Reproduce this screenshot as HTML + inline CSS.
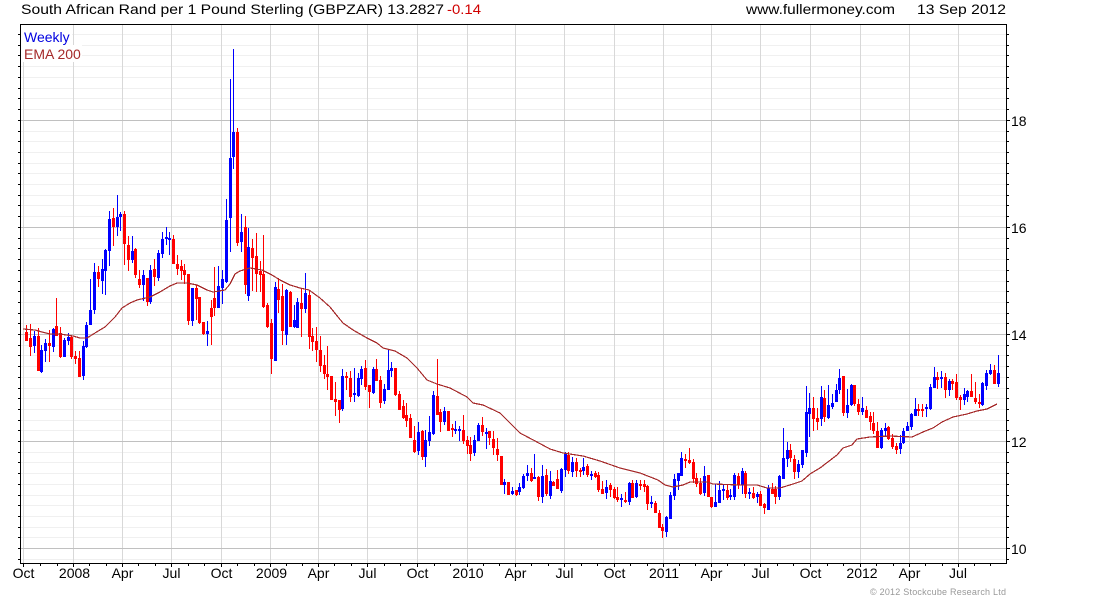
<!DOCTYPE html>
<html><head><meta charset="utf-8"><style>
html,body{margin:0;padding:0;background:#fff;width:1100px;height:600px;overflow:hidden}
svg{display:block}
text{font-family:"Liberation Sans",Arial,sans-serif;font-size:14px;fill:#000}
</style></head><body>
<svg width="1100" height="600" viewBox="0 0 1100 600" xmlns="http://www.w3.org/2000/svg">
<rect width="1100" height="600" fill="#fff"/>
<g shape-rendering="crispEdges" fill="none">
<path stroke="#f0f0f0" d="M21 34.5H1006M21 45.5H1006M21 55.5H1006M21 66.5H1006M21 77.5H1006M21 88.5H1006M21 98.5H1006M21 109.5H1006M21 131.5H1006M21 141.5H1006M21 152.5H1006M21 163.5H1006M21 173.5H1006M21 184.5H1006M21 195.5H1006M21 205.5H1006M21 216.5H1006M21 238.5H1006M21 248.5H1006M21 259.5H1006M21 270.5H1006M21 281.5H1006M21 291.5H1006M21 302.5H1006M21 313.5H1006M21 323.5H1006M21 345.5H1006M21 355.5H1006M21 366.5H1006M21 377.5H1006M21 388.5H1006M21 398.5H1006M21 409.5H1006M21 420.5H1006M21 430.5H1006M21 452.5H1006M21 462.5H1006M21 473.5H1006M21 484.5H1006M21 495.5H1006M21 505.5H1006M21 516.5H1006M21 527.5H1006M21 537.5H1006M21 559.5H1006"/>
<path stroke="#d8d8d8" d="M23.5 25V563M73.5 25V563M122.5 25V563M171.5 25V563M221.5 25V563M270.5 25V563M318.5 25V563M367.5 25V563M417.5 25V563M467.5 25V563M515.5 25V563M564.5 25V563M614.5 25V563M663.5 25V563M711.5 25V563M760.5 25V563M810.5 25V563M860.5 25V563M909.5 25V563M958.5 25V563"/>
<path stroke="#c0c0c0" d="M21 120.5H1006M21 227.5H1006M21 334.5H1006M21 441.5H1006M21 548.5H1006"/>
<rect x="21" y="25" width="51" height="20" fill="#fff"/>
<rect x="21" y="45" width="61" height="17" fill="#fff"/>
<path stroke="#000" d="M20.5 24.5H1006.5V563.5H20.5Z"/>
<path stroke="#000" d="M18 34.5H20M18 45.5H20M18 55.5H20M18 66.5H20M18 77.5H20M18 88.5H20M18 98.5H20M18 109.5H20M18 120.5H20M18 131.5H20M18 141.5H20M18 152.5H20M18 163.5H20M18 173.5H20M18 184.5H20M18 195.5H20M18 205.5H20M18 216.5H20M18 227.5H20M18 238.5H20M18 248.5H20M18 259.5H20M18 270.5H20M18 281.5H20M18 291.5H20M18 302.5H20M18 313.5H20M18 323.5H20M18 334.5H20M18 345.5H20M18 355.5H20M18 366.5H20M18 377.5H20M18 388.5H20M18 398.5H20M18 409.5H20M18 420.5H20M18 430.5H20M18 441.5H20M18 452.5H20M18 462.5H20M18 473.5H20M18 484.5H20M18 495.5H20M18 505.5H20M18 516.5H20M18 527.5H20M18 537.5H20M18 548.5H20M18 559.5H20"/>
<path stroke="#000" d="M1007 34.5H1009M1007 45.5H1009M1007 55.5H1009M1007 66.5H1009M1007 77.5H1009M1007 88.5H1009M1007 98.5H1009M1007 109.5H1009M1007 120.5H1010M1007 131.5H1009M1007 141.5H1009M1007 152.5H1009M1007 163.5H1009M1007 173.5H1009M1007 184.5H1009M1007 195.5H1009M1007 205.5H1009M1007 216.5H1009M1007 227.5H1010M1007 238.5H1009M1007 248.5H1009M1007 259.5H1009M1007 270.5H1009M1007 281.5H1009M1007 291.5H1009M1007 302.5H1009M1007 313.5H1009M1007 323.5H1009M1007 334.5H1010M1007 345.5H1009M1007 355.5H1009M1007 366.5H1009M1007 377.5H1009M1007 388.5H1009M1007 398.5H1009M1007 409.5H1009M1007 420.5H1009M1007 430.5H1009M1007 441.5H1010M1007 452.5H1009M1007 462.5H1009M1007 473.5H1009M1007 484.5H1009M1007 495.5H1009M1007 505.5H1009M1007 516.5H1009M1007 527.5H1009M1007 537.5H1009M1007 548.5H1010M1007 559.5H1009"/>
<path stroke="#000" d="M23.5 564V567M73.5 564V567M122.5 564V567M171.5 564V567M221.5 564V567M270.5 564V567M318.5 564V567M367.5 564V567M417.5 564V567M467.5 564V567M515.5 564V567M564.5 564V567M614.5 564V567M663.5 564V567M711.5 564V567M760.5 564V567M810.5 564V567M860.5 564V567M909.5 564V567M958.5 564V567M40.5 564V566M57.5 564V566M89.5 564V566M106.5 564V566M138.5 564V566M155.5 564V566M188.5 564V566M204.5 564V566M237.5 564V566M254.5 564V566M286.5 564V566M302.5 564V566M334.5 564V566M351.5 564V566M384.5 564V566M400.5 564V566M434.5 564V566M450.5 564V566M483.5 564V566M499.5 564V566M531.5 564V566M548.5 564V566M581.5 564V566M597.5 564V566M630.5 564V566M647.5 564V566M679.5 564V566M695.5 564V566M727.5 564V566M744.5 564V566M777.5 564V566M793.5 564V566M827.5 564V566M843.5 564V566M876.5 564V566M893.5 564V566M925.5 564V566M942.5 564V566M974.5 564V566M990.5 564V566"/>
</g>
<g shape-rendering="crispEdges" fill="none">
<path stroke="#f00" stroke-width="1" d="M26.5 325V341M30.5 324V356M38.5 328V371M49.5 330V362M56.5 298V336M60.5 327V358M71.5 336V359M75.5 351V364M79.5 351V377M98.5 266V287M113.5 208V246M124.5 211V265M128.5 236V271M135.5 248V278M139.5 270V288M147.5 278V306M154.5 259V286M173.5 235V264M177.5 255V275M181.5 260V280M184.5 264V284M188.5 274V325M196.5 285V320M199.5 297V324M203.5 322V335M211.5 300V345M214.5 267V316M237.5 128V246M245.5 216V294M252.5 239V291M256.5 233V292M260.5 261V292M263.5 235V308M267.5 303V328M271.5 319V374M278.5 278V313M282.5 284V345M290.5 291V327M301.5 289V337M309.5 290V349M312.5 328V351M316.5 327V362M320.5 336V372M324.5 355V379M327.5 346V390M331.5 376V400M335.5 382V416M339.5 400V423M346.5 372V390M350.5 371V402M365.5 360V390M369.5 386V408M376.5 359V381M380.5 376V408M395.5 368V396M399.5 391V410M403.5 400V419M406.5 403V427M410.5 414V438M414.5 426V453M422.5 430V460M437.5 359V415M440.5 409V432M448.5 411V431M452.5 424V437M463.5 415V444M467.5 436V454M470.5 437V461M482.5 417V436M489.5 431V445M493.5 431V455M497.5 438V461M501.5 456V485M508.5 482V495M516.5 490V496M531.5 468V482M538.5 476V501M546.5 469V496M553.5 481V486M557.5 470V489M568.5 452V474M576.5 458V477M580.5 468V477M587.5 464V477M595.5 471V478M598.5 472V492M602.5 481V494M610.5 483V497M614.5 487V499M617.5 487V502M625.5 492V503M632.5 480V498M640.5 480V490M644.5 480V492M647.5 485V510M655.5 501V513M659.5 510V528M662.5 524V538M685.5 454V468M689.5 448V464M693.5 459V483M696.5 473V487M700.5 478V495M708.5 475V497M711.5 497V508M727.5 484V500M738.5 473V489M745.5 471V498M753.5 487V499M760.5 491V506M764.5 503V514M772.5 483V494M775.5 486V504M790.5 444V462M794.5 455V479M813.5 397V431M817.5 408V430M824.5 390V422M843.5 376V416M854.5 385V406M858.5 399V415M866.5 406V418M870.5 412V430M873.5 412V434M877.5 422V448M888.5 426V440M892.5 434V449M896.5 443V454M918.5 404V416M922.5 404V417M937.5 372V389M945.5 373V398M952.5 379V390M956.5 374V400M960.5 395V410M971.5 374V397M975.5 382V404M979.5 394V408M994.5 365V384"/>
<path stroke="#f00" stroke-width="3" d="M26.5 332V341M30.5 338V347M38.5 336V371M49.5 343V346M56.5 326V336M60.5 333V357M71.5 337V357M75.5 356V359M79.5 358V377M98.5 272V279M113.5 218V227M124.5 214V244M128.5 245V260M135.5 249V275M139.5 279V285M147.5 278V302M154.5 269V277M173.5 239V264M177.5 264V269M181.5 266V271M184.5 270V275M188.5 274V321M196.5 288V299M199.5 297V323M203.5 322V334M211.5 308V317M214.5 298V308M237.5 132V243M245.5 227V285M252.5 248V258M256.5 256V274M260.5 271V275M263.5 274V307M267.5 305V327M271.5 323V359M278.5 289V300M282.5 296V331M290.5 292V327M301.5 303V309M309.5 295V337M312.5 336V342M316.5 341V350M320.5 350V366M324.5 365V374M327.5 374V377M331.5 376V400M335.5 399V402M339.5 400V410M346.5 376V378M350.5 378V397M365.5 368V387M369.5 385V392M376.5 369V381M380.5 380V403M395.5 368V395M399.5 394V410M403.5 406V418M406.5 415V421M410.5 418V438M414.5 440V452M422.5 431V457M437.5 396V415M440.5 412V422M448.5 411V431M452.5 428V430M463.5 430V441M467.5 440V446M470.5 445V454M482.5 425V432M489.5 431V438M493.5 439V448M497.5 449V455M501.5 456V485M508.5 482V495M516.5 490V495M531.5 473V481M538.5 477V497M546.5 475V494M553.5 482V486M557.5 479V489M568.5 455V471M576.5 462V471M580.5 470V472M587.5 466V475M595.5 473V477M598.5 475V490M602.5 489V494M610.5 485V490M614.5 489V498M617.5 497V500M625.5 500V502M632.5 483V498M640.5 484V486M644.5 484V487M647.5 486V504M655.5 503V513M659.5 513V528M662.5 527V531M685.5 459V461M689.5 460V463M693.5 462V479M696.5 478V484M700.5 483V494M708.5 475V497M711.5 497V507M727.5 490V498M738.5 476V485M745.5 473V494M753.5 493V498M760.5 494V506M764.5 504V508M772.5 489V494M775.5 489V497M790.5 450V458M794.5 459V472M813.5 408V419M817.5 418V422M824.5 398V417M843.5 376V413M854.5 385V404M858.5 404V412M866.5 410V418M870.5 416V422M873.5 423V431M877.5 431V448M888.5 427V439M892.5 438V447M896.5 446V450M918.5 409V411M922.5 409V411M937.5 377V380M945.5 377V390M952.5 381V384M956.5 382V398M960.5 397V400M971.5 391V397M975.5 398V402M979.5 402V404M994.5 370V384"/>
<path stroke="#00f" stroke-width="1" d="M34.5 331V353M41.5 345V373M45.5 339V362M53.5 328V352M64.5 338V357M68.5 333V345M83.5 341V380M86.5 322V348M90.5 279V325M94.5 263V314M102.5 259V294M105.5 249V295M109.5 211V266M117.5 195V236M120.5 212V231M132.5 236V263M143.5 270V301M150.5 265V304M158.5 250V281M162.5 232V258M166.5 227V245M169.5 232V255M192.5 288V326M207.5 321V346M218.5 266V308M222.5 270V304M226.5 199V283M230.5 79V252M233.5 49V169M241.5 214V252M248.5 228V301M275.5 282V361M286.5 289V345M294.5 305V328M297.5 298V328M305.5 273V313M342.5 369V411M354.5 368V402M358.5 373V397M361.5 366V385M373.5 367V394M384.5 384V404M388.5 350V390M391.5 362V377M418.5 422V455M425.5 430V467M429.5 416V446M433.5 391V435M444.5 407V425M455.5 421V434M459.5 426V441M474.5 435V456M478.5 423V441M486.5 428V449M504.5 479V494M512.5 487V495M519.5 483V495M523.5 474V489M527.5 465V481M534.5 454V479M542.5 465V503M550.5 471V499M561.5 468V493M565.5 452V477M572.5 457V477M583.5 458V475M591.5 471V480M606.5 480V499M621.5 494V507M629.5 482V505M636.5 480V498M651.5 496V508M666.5 516V537M670.5 492V519M674.5 474V500M678.5 473V490M681.5 452V476M704.5 466V496M715.5 484V507M719.5 481V503M723.5 485V500M730.5 489V500M734.5 473V500M742.5 468V494M749.5 488V499M757.5 492V503M768.5 485V510M779.5 475V500M783.5 428V479M787.5 442V467M798.5 460V478M802.5 450V468M806.5 386V457M809.5 393V437M821.5 386V426M828.5 385V419M832.5 394V409M836.5 384V402M839.5 369V394M847.5 389V418M851.5 384V406M862.5 397V415M881.5 428V449M885.5 423V436M900.5 435V454M903.5 428V444M907.5 422V431M911.5 413V430M915.5 398V416M926.5 404V417M930.5 384V410M934.5 367V388M941.5 371V388M949.5 379V396M964.5 388V405M967.5 390V402M982.5 382V406M986.5 370V390M990.5 364V375M998.5 355V387"/>
<path stroke="#00f" stroke-width="3" d="M34.5 336V346M41.5 350V372M45.5 343V351M53.5 329V347M64.5 340V357M68.5 337V341M83.5 346V376M86.5 325V347M90.5 310V325M94.5 272V310M102.5 269V281M105.5 250V271M109.5 219V251M117.5 217V227M120.5 214V217M132.5 251V260M143.5 275V285M150.5 270V302M158.5 253V278M162.5 239V254M166.5 237V239M169.5 238V240M192.5 288V321M207.5 331V334M218.5 286V308M222.5 279V288M226.5 220V282M230.5 158V218M233.5 132V157M241.5 232V242M248.5 247V296M275.5 287V361M286.5 290V335M294.5 320V327M297.5 302V328M305.5 293V309M342.5 376V409M354.5 393V395M358.5 378V396M361.5 369V379M373.5 369V393M384.5 389V401M388.5 370V390M391.5 368V371M418.5 432V451M425.5 440V457M429.5 432V441M433.5 395V434M444.5 411V422M455.5 429V431M459.5 429V431M474.5 440V453M478.5 425V441M486.5 432V434M504.5 482V485M512.5 491V494M519.5 487V492M523.5 476V488M527.5 473V476M534.5 477V479M542.5 476V497M550.5 481V496M561.5 469V491M565.5 453V470M572.5 462V472M583.5 467V471M591.5 474V476M606.5 487V493M621.5 498V500M629.5 483V502M636.5 483V497M651.5 502V504M666.5 517V532M670.5 495V519M674.5 479V496M678.5 473V481M681.5 458V476M704.5 476V493M715.5 502V507M719.5 490V503M723.5 489V491M730.5 495V497M734.5 475V497M742.5 471V485M749.5 492V494M757.5 494V497M768.5 488V510M779.5 476V497M783.5 458V479M787.5 450V459M798.5 464V472M802.5 450V465M806.5 412V453M809.5 408V414M821.5 397V419M828.5 405V418M832.5 403V407M836.5 390V402M839.5 378V390M847.5 405V413M851.5 385V405M862.5 408V412M881.5 430V448M885.5 428V431M900.5 443V449M903.5 431V443M907.5 426V431M911.5 414V427M915.5 409V416M926.5 407V409M930.5 387V409M934.5 377V388M941.5 377V379M949.5 381V390M964.5 394V400M967.5 391V397M982.5 383V405M986.5 373V386M990.5 370V374M998.5 373V384"/>
</g>
<polyline fill="none" stroke="#a52a2a" stroke-width="1.2" shape-rendering="crispEdges" points="23,329 35,330 42,332 50,334 60,334 73,336 80,338 87,338 95,333 105,327 115,317 122,308 130,303 137,300 150,297 160,292 170,286 177,283 187,283 197,285 207,290 213,292 225,290 230,284 235,274 240,271 250,268 262,270 272,275 280,280 290,285 300,288 309,290 320,298 330,307 338,317 343,323 353,330 367,338 377,343 383,348 395,351 407,358 417,368 427,380 437,384 450,388 467,397 473,403 483,405 500,413 510,423 520,433 537,442 550,449 563,453 583,456 600,461 620,468 640,473 658,480 665,485 673,487 683,485 690,482 707,482 713,484 740,485 757,485 767,488 780,488 793,484 802,481 810,474 820,468 837,455 843,448 852,445 857,439 870,437 890,436 912,437 923,432 933,428 942,422 953,417 967,414 977,411 987,409 997,404"/>
<text x="21" y="14" textLength="423" lengthAdjust="spacingAndGlyphs">South African Rand per 1 Pound Sterling (GBPZAR) 13.2827</text>
<text x="447" y="14" textLength="34" lengthAdjust="spacingAndGlyphs" style="fill:#d00000">-0.14</text>
<text x="746" y="14" textLength="149" lengthAdjust="spacingAndGlyphs">www.fullermoney.com</text>
<text x="917" y="14" textLength="89" lengthAdjust="spacingAndGlyphs">13 Sep 2012</text>
<text x="24" y="42" style="fill:#0000e0">Weekly</text>
<text x="24" y="59" style="fill:#a52a2a">EMA 200</text>
<text x="1011" y="126">18</text><text x="1011" y="233">16</text><text x="1011" y="340">14</text><text x="1011" y="447">12</text><text x="1011" y="554">10</text>
<g text-anchor="middle">
<text x="23.5" y="578">Oct</text><text x="74.5" y="578">2008</text><text x="122.5" y="578">Apr</text><text x="171.5" y="578">Jul</text><text x="221.5" y="578">Oct</text><text x="271.5" y="578">2009</text><text x="318.5" y="578">Apr</text><text x="367.5" y="578">Jul</text><text x="417.5" y="578">Oct</text><text x="468" y="578">2010</text><text x="515.5" y="578">Apr</text><text x="564.5" y="578">Jul</text><text x="614.5" y="578">Oct</text><text x="664" y="578">2011</text><text x="711.5" y="578">Apr</text><text x="760.5" y="578">Jul</text><text x="810.5" y="578">Oct</text><text x="862" y="578">2012</text><text x="909.5" y="578">Apr</text><text x="958" y="578">Jul</text>
</g>
<text x="870" y="595" textLength="136" lengthAdjust="spacing" style="font-size:9px;fill:#999">© 2012 Stockcube Research Ltd</text>
</svg>
</body></html>
